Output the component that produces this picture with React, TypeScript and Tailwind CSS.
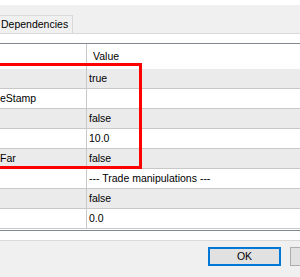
import React from 'react'

const ROWS = [
  { name: '', value: 'true' },
  { name: 'eStamp', value: '' },
  { name: '', value: 'false' },
  { name: '', value: '10.0' },
  { name: 'Far', value: 'false' },
  { name: '', value: '--- Trade manipulations ---' },
  { name: '', value: 'false' },
  { name: '', value: '0.0' },
]

export default function App() {
  return (
    <div
      className="relative w-[300px] h-[277px] overflow-hidden bg-white text-[10.5px] text-black"
      style={{ fontFamily: '"Liberation Sans", Arial, sans-serif' }}
    >
      {/* Top gap */}
      <div className="h-[5px] bg-white" />

      {/* Tab strip */}
      <div className="h-[29px] bg-[#f0f0f0] border-b border-[#d9d9d9] flex items-end">
        <div className="h-[19px] -mb-px flex items-center pl-[1px] pr-[4px] border-t border-r border-b border-[#d9d9d9] bg-[#f0f0f0] whitespace-nowrap">
          Dependencies
        </div>
      </div>

      {/* Tab page */}
      <div className="h-[207px] bg-white border-b border-[#d9d9d9] pt-[9px]">
        <div className="border-t border-b border-[#828790]">
          {/* Header */}
          <div className="flex h-[25px]">
            <div className="w-[87px] border-r border-[#c8c8c8]" />
            <div className="flex-1 flex items-center pl-[6px]">Value</div>
          </div>
          {ROWS.map((r, i) => (
            <div
              key={i}
              className={`flex h-[20px] border-b border-[#c8c8c8] ${i % 2 === 0 ? 'bg-[#ebebeb]' : 'bg-white'}`}
            >
              <div className="w-[87px] border-r border-[#c8c8c8] flex items-center whitespace-nowrap">
                {r.name}
              </div>
              <div className="flex-1 flex items-center pl-[2px] whitespace-nowrap">{r.value}</div>
            </div>
          ))}
          <div className="h-px" />
        </div>
      </div>

      {/* Button bar */}
      <div className="flex gap-[9px] pl-[208px] pt-[6px] bg-[#f0f0f0]">
        <button className="shrink-0 w-[73px] h-[19px] border-2 border-[#0078d7] bg-[#e1e1e1] flex items-center justify-center">
          OK
        </button>
        <button className="shrink-0 w-[73px] h-[19px] border border-[#adadad] bg-[#e1e1e1]" aria-label="Cancel" />
      </div>
      <div className="h-[20px] bg-[#f0f0f0]" />

      {/* Red highlight frame */}
      <div className="absolute left-[-10px] top-[63px] w-[152px] h-[106px] border-[3px] border-[#ff0000]" />
    </div>
  )
}
